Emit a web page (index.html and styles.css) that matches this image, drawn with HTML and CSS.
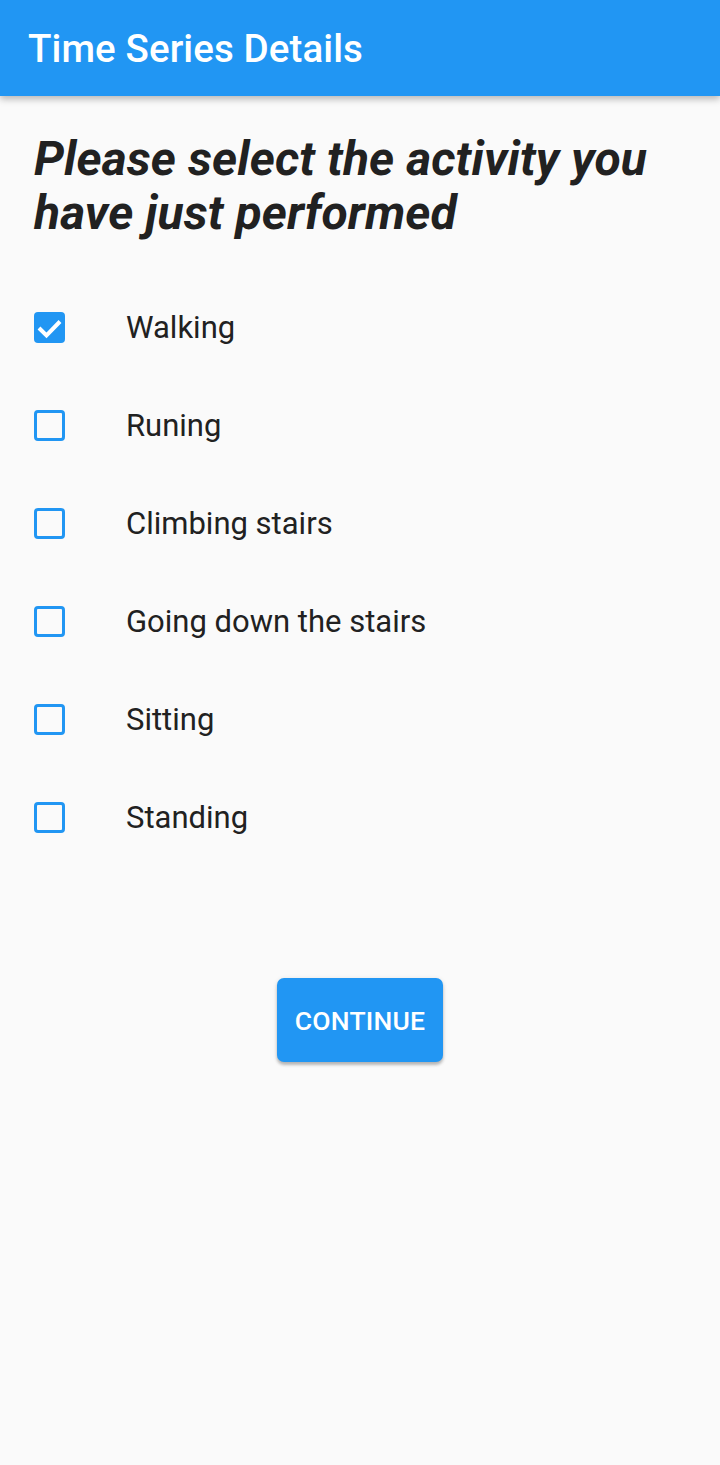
FILE: index.html
```html
<!DOCTYPE html>
<html lang="en">
<head>
<meta charset="utf-8">
<title>Time Series Details</title>
<link rel="stylesheet" href="styles.css">
</head>
<body>
<header class="appbar">
  <h1 class="appbar-title">Time Series Details</h1>
</header>
<main class="content">
  <h2 class="prompt">Please select the activity you have just performed</h2>
  <ul class="options">
    <li class="option">
      <span class="box checked">
        <svg viewBox="0 0 31 31" width="31" height="31"><rect x="0" y="0" width="31" height="31" rx="4" fill="#2196f3"/><path d="M5 16 L12.5 23.5 L26 9.5" fill="none" stroke="#fff" stroke-width="4"/></svg>
      </span>
      <span class="label">Walking</span>
    </li>
    <li class="option"><span class="box"></span><span class="label">Runing</span></li>
    <li class="option"><span class="box"></span><span class="label">Climbing stairs</span></li>
    <li class="option"><span class="box"></span><span class="label">Going down the stairs</span></li>
    <li class="option"><span class="box"></span><span class="label">Sitting</span></li>
    <li class="option"><span class="box"></span><span class="label">Standing</span></li>
  </ul>
  <div class="actions">
    <button class="btn">CONTINUE</button>
  </div>
</main>
</body>
</html>
```
FILE: styles.css
```css
html, body {
  margin: 0;
  padding: 0;
}
body {
  background: #fafafa;
  font-family: Roboto, "Noto Sans", sans-serif;
  width: 720px;
  min-height: 1465px;
}
.appbar {
  height: 96px;
  background: #2196f3;
  display: flex;
  align-items: center;
  padding-left: 28px;
  box-shadow: 0 3px 7px rgba(0, 0, 0, 0.28);
  position: relative;
}
.appbar-title {
  margin: 0;
  color: #fff;
  font-size: 38.5px;
  font-weight: 500;
  letter-spacing: 0.1px;
}
.content {
  padding: 36px 28px 0 28px;
}
.prompt {
  margin: 0;
  font-size: 48px;
  line-height: 54px;
  font-style: italic;
  font-weight: 700;
  color: #212121;
  letter-spacing: 0.1px;
  padding-left: 6px;
}
.options {
  list-style: none;
  margin: 38px 0 0 0;
  padding: 0;
}
.option {
  height: 98px;
  display: flex;
  align-items: center;
}
.box {
  width: 31px;
  height: 31px;
  margin-left: 6px;
  box-sizing: border-box;
  border: 3.5px solid #2196f3;
  border-radius: 4px;
  flex: none;
}
.box.checked {
  border: none;
}
.box svg {
  display: block;
}
.label {
  margin-left: 61px;
  font-size: 31px;
  color: #212121;
}
.actions {
  display: flex;
  justify-content: center;
  margin-top: 112px;
  margin-right: -28px;
  margin-left: -28px;
}
.btn {
  width: 166px;
  height: 84px;
  border: none;
  border-radius: 7px;
  background: #2196f3;
  color: #fff;
  font-family: Roboto, sans-serif;
  font-size: 26.5px;
  font-weight: 500;
  letter-spacing: 0.2px;
  box-shadow: 0 3px 3px rgba(0, 0, 0, 0.22), 0 1px 5px rgba(0, 0, 0, 0.12);
}
```
